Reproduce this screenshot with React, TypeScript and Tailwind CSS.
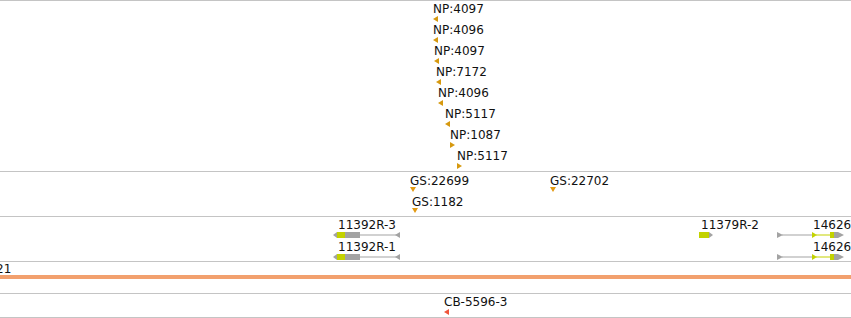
import React from 'react';

type Dir = 'left' | 'right' | 'down';

const GOLD = '#d6990f';
const GS_GOLD = '#e39a12';
const GENE_GREEN = '#c3d200';
const GENE_GRAY = '#a3a3a3';

const Arrow: React.FC<{ dir: Dir; color: string }> = ({ dir, color }) => {
  const w = dir === 'down' ? 6 : 5;
  const h = dir === 'down' ? 5 : 6;
  const pts = dir === 'left' ? '5,0 5,6 0,3' : dir === 'right' ? '0,0 0,6 5,3' : '0,0 6,0 3,5';
  return (
    <svg width={w} height={h} className="block">
      <polygon points={pts} fill={color} />
    </svg>
  );
};

// a feature on the track canvas: name above, glyph below, placed by its coordinate
const Feature: React.FC<{ x: number; y: number; label?: string; gap?: string; children: React.ReactNode }> = ({
  x,
  y,
  label,
  gap = 'gap-px',
  children,
}) => (
  <div className={`absolute flex flex-col items-start ${gap}`} style={{ left: x, top: y }}>
    {label && <span className="whitespace-nowrap text-[12px] leading-[12px] text-[#111]">{label}</span>}
    {children}
  </div>
);

const Track: React.FC<{ h: string; children?: React.ReactNode }> = ({ h, children }) => (
  <div className={`relative border-b border-[#c4c4c4] ${h}`}>{children}</div>
);

// 11392R: minus strand, utr + cds on the left, intron line to the right
const Gene11392: React.FC = () => (
  <svg width={70} height={6} className="-ml-[5px] block">
    <polygon points="0,3 4,0 4,6" fill={GENE_GRAY} />
    <rect x={4} y={0} width={8} height={6} fill={GENE_GREEN} />
    <rect x={12} y={0} width={15} height={6} fill={GENE_GRAY} />
    <rect x={27} y={2.5} width={37} height={1} fill={GENE_GRAY} />
    <polygon points="62,3 67,0 67,6" fill={GENE_GRAY} />
  </svg>
);

const Gene11379: React.FC = () => (
  <svg width={16} height={6} className="-ml-[2px] block">
    <rect x={0} y={0} width={10} height={6} fill={GENE_GREEN} />
    <polygon points="10,0 14,3 10,6" fill={GENE_GRAY} />
  </svg>
);

const Gene14626: React.FC = () => (
  <svg width={74} height={6} className="-ml-[36px] block">
    <polygon points="0,0 6,3 0,6" fill={GENE_GRAY} />
    <rect x={5} y={2.5} width={30} height={1} fill={GENE_GRAY} />
    <polygon points="35,0 40,3 35,6" fill={GENE_GREEN} />
    <rect x={39} y={2.5} width={14} height={1} fill={GENE_GREEN} />
    <rect x={53} y={0} width={4} height={6} fill={GENE_GREEN} />
    <rect x={57} y={0} width={4} height={6} fill={GENE_GRAY} />
    <polygon points="61,0 67,3 61,6" fill={GENE_GRAY} />
  </svg>
);

const npFeatures: { x: number; name: string; dir: Dir }[] = [
  { x: 433, name: 'NP:4097', dir: 'left' },
  { x: 433, name: 'NP:4096', dir: 'left' },
  { x: 434, name: 'NP:4097', dir: 'left' },
  { x: 436, name: 'NP:7172', dir: 'left' },
  { x: 438, name: 'NP:4096', dir: 'left' },
  { x: 445, name: 'NP:5117', dir: 'left' },
  { x: 450, name: 'NP:1087', dir: 'right' },
  { x: 457, name: 'NP:5117', dir: 'right' },
];

const gsFeatures = [
  { x: 410, row: 0, name: 'GS:22699' },
  { x: 550, row: 0, name: 'GS:22702' },
  { x: 412, row: 1, name: 'GS:1182' },
];

const geneFeatures = [
  { x: 338, row: 0, name: '11392R-3', glyph: <Gene11392 /> },
  { x: 338, row: 1, name: '11392R-1', glyph: <Gene11392 /> },
  { x: 701, row: 0, name: '11379R-2', glyph: <Gene11379 /> },
  { x: 813, row: 0, name: '14626', glyph: <Gene14626 /> },
  { x: 813, row: 1, name: '14626', glyph: <Gene14626 /> },
];

export default function App() {
  return (
    <div className="h-[318px] w-full overflow-hidden bg-white font-['DejaVu_Sans',sans-serif]">
      <div className="border-t border-[#c4c4c4]">
        <Track h="h-[171px]">
          {npFeatures.map((f, i) => (
            <Feature key={i} x={f.x} y={2 + i * 21} label={f.name}>
              <Arrow dir={f.dir} color={GOLD} />
            </Feature>
          ))}
        </Track>

        <Track h="h-[45px]">
          {gsFeatures.map((f, i) => (
            <Feature key={i} x={f.x} y={3 + f.row * 21} label={f.name} gap="gap-0">
              <Arrow dir="down" color={GS_GOLD} />
            </Feature>
          ))}
        </Track>

        <Track h="h-[45px]">
          {geneFeatures.map((f, i) => (
            <Feature key={i} x={f.x} y={2 + f.row * 22} label={f.name} gap="gap-px">
              {f.glyph}
            </Feature>
          ))}
        </Track>

        <Track h="h-[32px]">
          <div className="flex flex-col gap-[1px] pt-[3px]">
            <span className="-ml-[4px] text-[12px] leading-[9px] text-[#111]">21</span>
            <div className="h-[4px] w-full bg-[#f2a06e]" />
          </div>
        </Track>

        <Track h="h-[24px]">
          <Feature x={444} y={2} label="CB-5596-3">
            <Arrow dir="left" color="#f0553a" />
          </Feature>
        </Track>
      </div>
    </div>
  );
}
